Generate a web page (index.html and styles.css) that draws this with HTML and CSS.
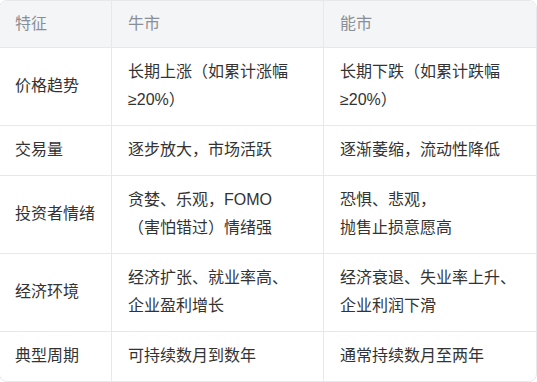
FILE: index.html
```html
<!DOCTYPE html>
<html lang="zh-CN">
<head>
<meta charset="utf-8">
<title>牛市与能市对比</title>
<link rel="stylesheet" href="styles.css">
</head>
<body>
<table class="compare">
  <colgroup>
    <col class="c1">
    <col class="c2">
    <col class="c3">
  </colgroup>
  <thead>
    <tr>
      <th>特征</th>
      <th>牛市</th>
      <th>能市</th>
    </tr>
  </thead>
  <tbody>
    <tr>
      <td>价格趋势</td>
      <td>长期上涨（如累计涨幅<br>≥20%）</td>
      <td>长期下跌（如累计跌幅<br>≥20%）</td>
    </tr>
    <tr>
      <td>交易量</td>
      <td>逐步放大，市场活跃</td>
      <td>逐渐萎缩，流动性降低</td>
    </tr>
    <tr>
      <td>投资者情绪</td>
      <td>贪婪、乐观，FOMO<br>（害怕错过）情绪强</td>
      <td>恐惧、悲观，<br>抛售止损意愿高</td>
    </tr>
    <tr>
      <td>经济环境</td>
      <td>经济扩张、就业率高、<br>企业盈利增长</td>
      <td>经济衰退、失业率上升、<br>企业利润下滑</td>
    </tr>
    <tr>
      <td>典型周期</td>
      <td>可持续数月到数年</td>
      <td>通常持续数月至两年</td>
    </tr>
  </tbody>
</table>
</body>
</html>
```

FILE: styles.css
```css
html, body {
  margin: 0;
  padding: 0;
  background: #ffffff;
  overflow: hidden;
}

body {
  font-family: "Liberation Sans", "Noto Sans CJK SC", sans-serif;
  font-size: 16px;
  color: #333333;
}

.compare {
  width: 538px;
  margin-left: -1px;
  table-layout: fixed;
  border-collapse: separate;
  border-spacing: 0;
  border: 1px solid #e6e8eb;
  border-radius: 8px;
}

.compare .c1 { width: 112px; }
.compare .c2 { width: 212px; }
.compare .c3 { width: 212px; }

.compare th,
.compare td {
  text-align: left;
  vertical-align: middle;
  padding: 10px 15px 11px 15px;
  line-height: 28px;
  border-right: 1px solid #e6e8eb;
  border-bottom: 1px solid #e6e8eb;
  font-weight: normal;
}

.compare th:last-child,
.compare td:last-child {
  border-right: none;
}

.compare tbody tr:last-child td {
  border-bottom: none;
}

.compare th {
  background: #f4f5f7;
  color: #8a8e96;
  padding-top: 9px;
  padding-bottom: 9px;
}

.compare th:first-child { border-top-left-radius: 7px; }
.compare th:last-child { border-top-right-radius: 7px; }

.compare td:nth-child(2),
.compare td:nth-child(3),
.compare th:nth-child(2),
.compare th:nth-child(3) {
  padding-left: 16px;
}
```
